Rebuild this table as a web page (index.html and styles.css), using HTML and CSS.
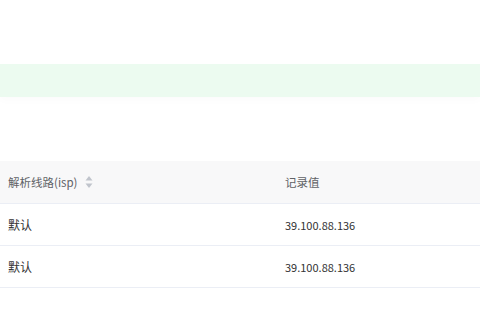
FILE: index.html
```html
<!DOCTYPE html>
<html lang="zh-CN">
<head>
<meta charset="utf-8">
<link rel="stylesheet" href="styles.css">
</head>
<body>
<div class="page">
  <div class="notice"></div>
  <div class="table">
    <div class="row head">
      <div class="cell">解析线路(isp)
        <span class="sort">
          <svg width="8" height="14" viewBox="0 0 8 14"><path d="M4 1 L7.5 5.5 H0.5 Z" fill="#c0c4cc"/><path d="M4 13 L7.5 8.5 H0.5 Z" fill="#c0c4cc"/></svg>
        </span>
      </div>
      <div class="cell">记录值</div>
    </div>
    <div class="row">
      <div class="cell">默认</div>
      <div class="cell num">39.100.88.136</div>
    </div>
    <div class="row">
      <div class="cell">默认</div>
      <div class="cell num">39.100.88.136</div>
    </div>
  </div>
</div>
</body>
</html>
```
FILE: styles.css
```css
html, body { margin: 0; padding: 0; background: #fff; }
body { font-family: "Noto Sans CJK SC", "Noto Sans", sans-serif; font-size: 12px; color: #333; }
.page { padding-top: 64px; }
.notice { height: 33px; background: #ecfbf0; box-shadow: 0 4px 8px rgba(0,0,0,0.015); }
.table { margin-top: 64px; }
.row { display: grid; grid-template-columns: 277px 1fr; height: 41px; border-bottom: 1px solid #ebeef5; }
.row.head { height: 42px; background: #f8f8f9; color: #606266; font-size: 11.5px; }
.cell { display: flex; align-items: center; padding-left: 8px; }
.num { font-size: 11px; }
.sort { display: inline-flex; margin-left: 8px; }
```
